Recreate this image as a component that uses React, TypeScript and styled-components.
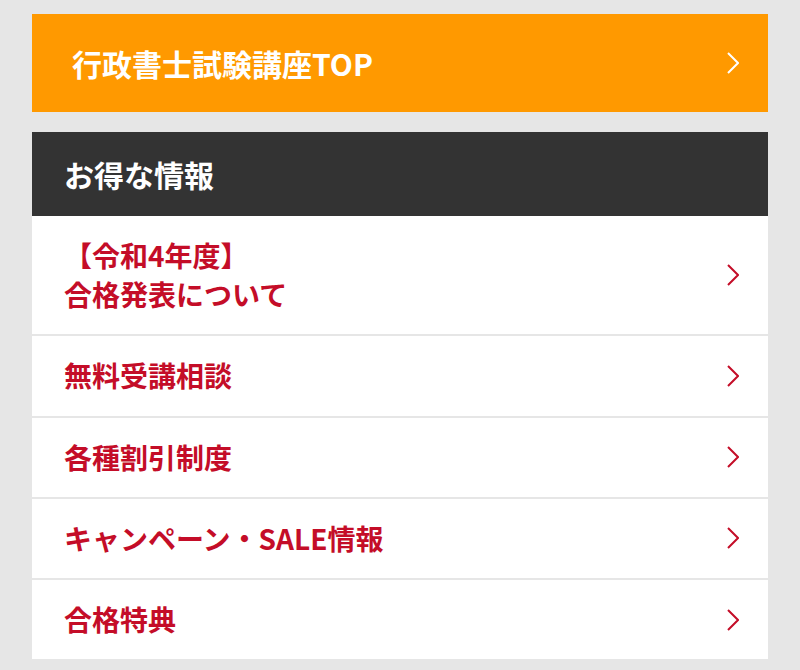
import React from "react";
import styled, { createGlobalStyle } from "styled-components";

const Global = createGlobalStyle`
  html, body { margin: 0; padding: 0; background: #e6e6e6; }
  body { font-family: "Noto Sans CJK JP", "Noto Sans", sans-serif; }
  * { box-sizing: border-box; }
`;

const Page = styled.div`
  padding: 14px 32px 12px;
  display: flex;
  flex-direction: column;
  gap: 20px;
`;

const TopLink = styled.a`
  display: flex;
  align-items: center;
  justify-content: space-between;
  height: 98px;
  padding: 0 29px 0 40px;
  background: #ff9900;
  color: #fff;
  font-size: 30px;
  font-weight: 700;
  text-decoration: none;
`;

const Section = styled.section`
  display: flex;
  flex-direction: column;
  gap: 2px;
`;

const SectionHeader = styled.h2`
  margin: 0 0 -2px;
  height: 84px;
  display: flex;
  align-items: center;
  padding: 0 32px;
  background: #333333;
  color: #fff;
  font-size: 30px;
  font-weight: 700;
`;

const Item = styled.a`
  display: flex;
  align-items: center;
  justify-content: space-between;
  padding: 20px 29px 20px 32px;
  background: #fff;
  color: #c40d28;
  font-size: 28px;
  font-weight: 700;
  line-height: 1.4;
  text-decoration: none;
`;

const Label = styled.span`
  display: block;
`;

const Chevron = ({ color }: { color: string }) => (
  <svg width="12" height="22" viewBox="0 0 12 22" fill="none">
    <path d="M1 1 L11 11 L1 21" stroke={color} strokeWidth="2" />
  </svg>
);

const items: React.ReactNode[] = [
  <>【令和4年度】<br />合格発表について</>,
  "無料受講相談",
  "各種割引制度",
  "キャンペーン・SALE情報",
  "合格特典",
];

export default function App() {
  return (
    <>
      <Global />
      <Page>
        <TopLink href="#">
          <span>行政書士試験講座TOP</span>
          <Chevron color="#ffffff" />
        </TopLink>
        <Section>
          <SectionHeader>お得な情報</SectionHeader>
          {items.map((it, i) => (
            <Item href="#" key={i}>
              <Label>{it}</Label>
              <Chevron color="#c40d28" />
            </Item>
          ))}
        </Section>
      </Page>
    </>
  );
}
